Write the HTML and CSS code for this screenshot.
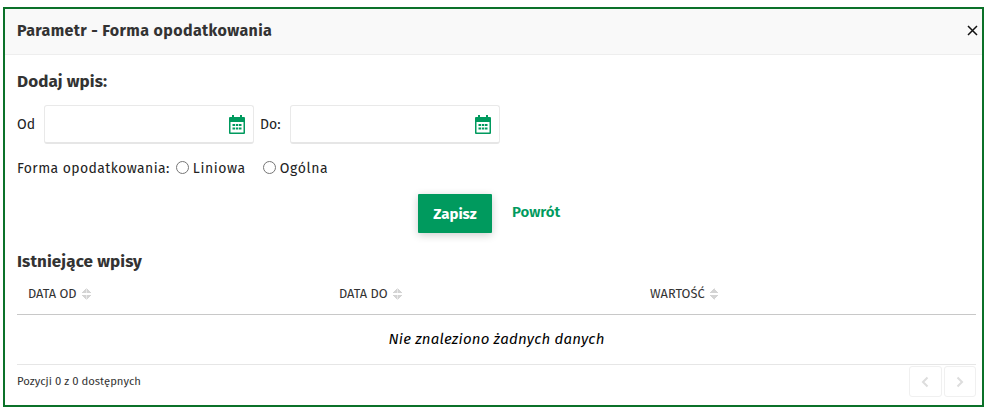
FILE: index.html
```html
<!DOCTYPE html>
<html lang="pl">
<head>
    <meta charset="UTF-8">
    <meta name="viewport" content="width=device-width, initial-scale=1.0">
    <title>Parametr - Forma opodatkowania</title>
    <link rel="stylesheet" href="styles.css">
</head>
<body>
    <div class="modal">
        <div class="modal-header">
            <h4>Parametr - Forma opodatkowania</h4>
            <button class="close">
                <svg width="11" height="11" viewBox="0 0 11 11"><path d="M1 1l9 9M10 1l-9 9" stroke="#111" stroke-width="1.5" fill="none"/></svg>
            </button>
        </div>
        <div class="modal-body">
            <h3 class="add-title">Dodaj wpis:</h3>
            <div class="date-row">
                <label>Od</label>
                <div class="date-input">
                    <svg class="cal" width="16" height="19" viewBox="0 0 16 19"><path fill-rule="evenodd" fill="#009a5e" d="M3 0h2v2h6V0h2v2h2a1 1 0 0 1 1 1v15a1 1 0 0 1-1 1H1a1 1 0 0 1-1-1V3a1 1 0 0 1 1-1h2zM1.500 7v10.500h13V7z"/><path fill="#009a5e" d="M3.500 9h2.500v2H3.500zM6.800 9h2.500v2H6.800zM10 9h2.500v2H10zM3.500 12.500h2.500v2H3.500zM6.800 12.500h2.500v2H6.800zM10 12.500h2.500v2H10z"/></svg>
                </div>
                <label>Do:</label>
                <div class="date-input">
                    <svg class="cal" width="16" height="19" viewBox="0 0 16 19"><path fill-rule="evenodd" fill="#009a5e" d="M3 0h2v2h6V0h2v2h2a1 1 0 0 1 1 1v15a1 1 0 0 1-1 1H1a1 1 0 0 1-1-1V3a1 1 0 0 1 1-1h2zM1.500 7v10.500h13V7z"/><path fill="#009a5e" d="M3.500 9h2.500v2H3.500zM6.800 9h2.500v2H6.800zM10 9h2.500v2H10zM3.500 12.500h2.500v2H3.500zM6.800 12.500h2.500v2H6.800zM10 12.500h2.500v2H10z"/></svg>
                </div>
            </div>
            <div class="radio-row">
                <span>Forma opodatkowania:</span>
                <label class="radio"><input type="radio" name="forma">Liniowa</label>
                <label class="radio"><input type="radio" name="forma">Ogólna</label>
            </div>
            <div class="actions">
                <button class="btn-save">Zapisz</button>
                <a class="btn-back" href="#">Powrót</a>
            </div>
            <h3 class="list-title">Istniejące wpisy</h3>
            <table class="entries">
                <thead>
                    <tr>
                        <th class="col">DATA OD <span class="sort"></span></th>
                        <th class="col">DATA DO <span class="sort"></span></th>
                        <th>WARTOŚĆ <span class="sort"></span></th>
                    </tr>
                </thead>
                <tbody>
                    <tr>
                        <td colspan="3">Nie znaleziono żadnych danych</td>
                    </tr>
                </tbody>
            </table>
            <div class="table-footer">
                <span>Pozycji 0 z 0 dostępnych</span>
                <div class="pager">
                    <button><svg width="8" height="12" viewBox="0 0 8 12"><path d="M6.500 1.500L2 6l4.500 4.500" stroke="#ddd" stroke-width="2" fill="none"/></svg></button>
                    <button><svg width="8" height="12" viewBox="0 0 8 12"><path d="M1.500 1.500L6 6l-4.500 4.500" stroke="#ddd" stroke-width="2" fill="none"/></svg></button>
                </div>
            </div>
        </div>
    </div>
</body>
</html>
```

FILE: styles.css
```css
body {
    font-family: 'Fira Sans', 'Noto Sans', sans-serif;
    background-color: #ffffff;
    color: #333;
    margin: 0;
    padding: 7px 6px 6px 3px;
}
.modal {
    border: 2px solid #0b7129;
    height: 396px;
}
.modal-header {
    display: flex;
    align-items: center;
    justify-content: space-between;
    box-sizing: border-box;
    height: 46px;
    padding: 0 4px 2px 12px;
    background-color: #f9f9f9;
    border-bottom: 1px solid #eee;
}
.modal-header h4 {
    margin: 0;
    font-size: 16px;
    letter-spacing: 0.37px;
    font-weight: 700;
}
.close {
    display: flex;
    background: none;
    border: none;
    padding: 0;
}
.modal-body {
    padding: 0 6px 0 12px;
}
.add-title {
    margin: 0;
    padding-top: 15px;
    font-size: 17px;
    line-height: 23px;
    letter-spacing: 0.1px;
    font-weight: 700;
}
.date-row {
    display: flex;
    align-items: center;
    margin-top: 12px;
    font-size: 14px;
    color: #222;
}
.date-row label {
    width: 27px;
}
.date-row label + .date-input + label {
    width: 36px;
    padding-left: 6px;
    box-sizing: border-box;
}
.date-input {
    display: flex;
    align-items: center;
    justify-content: flex-end;
    box-sizing: border-box;
    width: 210px;
    height: 39px;
    padding-right: 8px;
    border: 1px solid #e9e9e9;
    border-bottom: 2px solid #e6e6e6;
    border-radius: 3px;
}
.radio-row {
    display: flex;
    align-items: center;
    margin-top: 15px;
    font-size: 14px;
    line-height: 20px;
    letter-spacing: 0.4px;
    color: #222;
}
.radio {
    display: flex;
    align-items: center;
    margin-right: 11px;
    letter-spacing: 0.6px;
}
.radio input {
    width: 13px;
    height: 13px;
    margin: 0 4px 3px 6px;
}
.actions {
    display: flex;
    align-items: center;
    margin: 15px 0 0 401px;
}
.btn-save {
    width: 74px;
    height: 39px;
    font-family: inherit;
    font-size: 15px;
    font-weight: 700;
    color: #fff;
    background-color: #009a5e;
    border: none;
    border-radius: 1px;
    box-shadow: 0 2px 8px rgba(0, 0, 0, 0.2);
}
.btn-back {
    margin: 0 0 3px 20px;
    font-size: 15px;
    font-weight: 600;
    color: #009a5e;
    text-decoration: none;
}
.list-title {
    margin: 17px 0 0;
    font-size: 17px;
    line-height: 23px;
    letter-spacing: 0.1px;
    font-weight: 700;
}
.entries {
    width: 100%;
    border-collapse: collapse;
    table-layout: fixed;
    margin-top: 3px;
}
.entries th {
    height: 38px;
    padding: 0 11px 3px;
    box-sizing: border-box;
    text-align: left;
    font-size: 12.800px;
    font-weight: 400;
    border-bottom: 1px solid #c8c8c8;
}
.entries .col {
    width: 311px;
}
.entries td {
    height: 50px;
    padding: 0;
    box-sizing: border-box;
    text-align: center;
    font-size: 15px;
    letter-spacing: 0.2px;
    font-style: italic;
    font-weight: 400;
    color: #000;
    border-bottom: 1px solid #e6e6e6;
}
.sort {
    display: inline-block;
    width: 9px;
    height: 12px;
    margin-left: 2px;
    vertical-align: -2px;
    background:
        linear-gradient(to top left, #d4d4d4 50%, transparent 50%) 0 0 / 50% 5px no-repeat,
        linear-gradient(to top right, #d4d4d4 50%, transparent 50%) 100% 0 / 50% 5px no-repeat,
        linear-gradient(to bottom left, #d4d4d4 50%, transparent 50%) 0 100% / 50% 5px no-repeat,
        linear-gradient(to bottom right, #d4d4d4 50%, transparent 50%) 100% 100% / 50% 5px no-repeat;
}
.table-footer {
    display: flex;
    align-items: center;
    justify-content: space-between;
    height: 34px;
    font-size: 11.300px;
}
.table-footer span {
    margin-bottom: 2px;
}
.pager {
    display: flex;
    gap: 2px;
}
.pager button {
    display: flex;
    align-items: center;
    justify-content: center;
    width: 32.500px;
    height: 31px;
    padding: 0;
    background: #fff;
    border: 1px solid #f0f0f0;
    border-radius: 3px;
}
```
